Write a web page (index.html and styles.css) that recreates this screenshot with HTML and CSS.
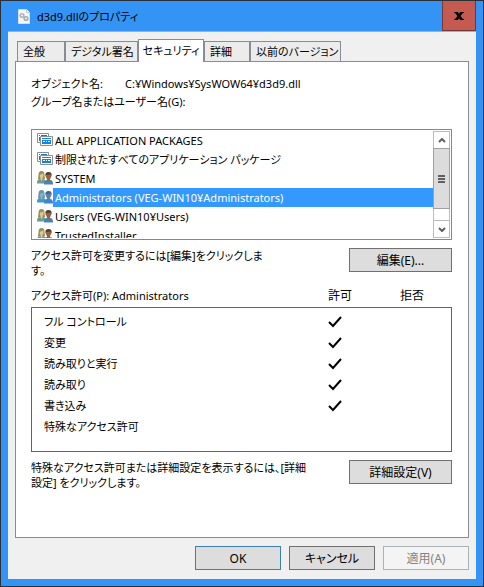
FILE: index.html
```html
<!DOCTYPE html>
<html lang="ja">
<head>
<meta charset="utf-8">
<meta name="viewport" content="width=device-width, initial-scale=1">
<title>d3d9.dllのプロパティ</title>
<link rel="stylesheet" href="styles.css">
</head>
<body>
<svg class="defs" aria-hidden="true">
  <symbol id="package" viewBox="0 0 16 16">
    <path d="M.5 1.500h11v9H.5z" fill="#fff" stroke="#8a9196"/>
    <path d="M2 3h1v1H2zM4 3h6v1H4zM2 5h1v4H2z" fill="#1c78c4"/>
    <path d="M3.500 4.500h12v9h-12z" fill="#fff" stroke="#8a9196"/>
    <path d="M5 6h9v1H5zM5 8h9v4H5z" fill="#1683d8"/>
    <path d="M6 9h2v1H6zM9 9h1v1H9zM11 9h2v1h-2z" fill="#fff"/>
  </symbol>
  <symbol id="users" viewBox="0 0 16 16">
    <path class="hair-a" d="M1 9c0-1 .5-2 .5-4C1.500 2.500 2.500 1 4.500 1s3 1.500 3 3.500c0 2 .5 3 .5 4.500z"/>
    <path class="coat-a" d="M0 13.500c0-3 .7-4.300 3-4.500h3c2 .2 3 1.500 3 4.500z"/>
    <path class="face-a" d="M3 4.500C4 4.500 5.500 4 6 3c.8 1 .8 3.500-.5 5v1.500L4.500 11l-1-1.500V8C3 7 2.700 6 3 4.500z"/>
    <path class="coat-b" d="M7 14.500c0-3 .8-4.300 3-4.500h3c2.300.2 3 1.500 3 4.500z"/>
    <path class="hair-b" d="M8.500 6C8 3.500 9 2 11.500 2S15 3.500 14.500 6l-.5 1H9z"/>
    <path class="face-b" d="M9 5c2 .2 3.500-.2 4.500-.8L14 5c.2 2-.3 3.500-1 4.200V10l-1.500 1.500L10 10v-.8C9.300 8.500 8.800 7 9 5z"/>
  </symbol>
  <symbol id="check" viewBox="0 0 14 12">
    <path d="M1 6l4 4L13 1" fill="none" stroke="#000" stroke-width="2"/>
  </symbol>
</svg>
<main class="window">
  <header class="titlebar">
    <svg class="file-icon" viewBox="0 0 12 15" aria-hidden="true">
      <path d="M.5.5h8l3 3v11H.5z" fill="#f5f5f5" stroke="#d9dde0"/>
      <path d="M8.500.5v3h3" fill="#fff" stroke="#c4c8cc"/>
      <circle cx="4" cy="6.500" r="1.800" fill="none" stroke="#b0b5b9" stroke-width="1.600"/>
      <circle cx="8" cy="9.500" r="1.800" fill="none" stroke="#a6abb0" stroke-width="1.600"/>
    </svg>
    <h1>d3d9.dllのプロパティ</h1>
    <button class="close" type="button" aria-label="閉じる">
      <svg viewBox="0 0 10 8" aria-hidden="true"><path d="M0 0h4l1 2 1-2h4v1H9L6.500 4 9 7h1v1H6L5 6 4 8H0V7h1l2.500-3L1 1H0z"/></svg>
    </button>
  </header>
  <div class="client">
    <div class="tabs" role="tablist">
      <button type="button" role="tab">全般</button>
      <button type="button" role="tab">デジタル署名</button>
      <button type="button" role="tab" class="active" aria-selected="true">セキュリティ</button>
      <button type="button" role="tab">詳細</button>
      <button type="button" role="tab">以前のバージョン</button>
    </div>
    <section class="panel" role="tabpanel">
      <div class="object"><span>オブジェクト名:</span><span>C:¥Windows¥SysWOW64¥d3d9.dll</span></div>
      <div class="caption" id="groups">グループ名またはユーザー名(G):</div>
      <div class="listbox">
        <ul role="listbox" aria-labelledby="groups">
          <li role="option"><svg class="item-icon"><use href="#package"/></svg><span>ALL APPLICATION PACKAGES</span></li>
          <li role="option"><svg class="item-icon"><use href="#package"/></svg><span>制限されたすべてのアプリケーション パッケージ</span></li>
          <li role="option"><svg class="item-icon"><use href="#users"/></svg><span>SYSTEM</span></li>
          <li role="option" class="selected" aria-selected="true"><svg class="item-icon"><use href="#users"/></svg><span>Administrators (VEG-WIN10¥Administrators)</span></li>
          <li role="option"><svg class="item-icon"><use href="#users"/></svg><span>Users (VEG-WIN10¥Users)</span></li>
          <li role="option"><svg class="item-icon"><use href="#users"/></svg><span>TrustedInstaller</span></li>
        </ul>
        <div class="scrollbar">
          <button type="button" aria-label="上へ"><svg viewBox="0 0 8 5"><path d="M1 4l3-3 3 3"/></svg></button>
          <div class="thumb"><i></i><i></i><i></i></div>
          <button type="button" class="down" aria-label="下へ"><svg viewBox="0 0 8 5"><path d="M1 1l3 3 3-3"/></svg></button>
        </div>
      </div>
      <div class="action">
        <p>アクセス許可を変更するには[編集]をクリックしま<br>す。</p>
        <button class="button wide" type="button">編集(E)...</button>
      </div>
      <table class="permissions">
        <thead><tr><th scope="col">アクセス許可(P): Administrators</th><th scope="col">許可</th><th scope="col">拒否</th></tr></thead>
        <tbody>
          <tr><td>フル コントロール</td><td><svg><use href="#check"/></svg></td><td></td></tr>
          <tr><td>変更</td><td><svg><use href="#check"/></svg></td><td></td></tr>
          <tr><td>読み取りと実行</td><td><svg><use href="#check"/></svg></td><td></td></tr>
          <tr><td>読み取り</td><td><svg><use href="#check"/></svg></td><td></td></tr>
          <tr><td>書き込み</td><td><svg><use href="#check"/></svg></td><td></td></tr>
          <tr><td>特殊なアクセス許可</td><td></td><td></td></tr>
        </tbody>
      </table>
      <div class="action">
        <p>特殊なアクセス許可または詳細設定を表示するには、[詳細<br>設定] をクリックします。</p>
        <button class="button wide" type="button">詳細設定(V)</button>
      </div>
    </section>
    <footer>
      <button class="button default" type="button">OK</button>
      <button class="button" type="button">キャンセル</button>
      <button class="button" type="button" disabled>適用(A)</button>
    </footer>
  </div>
</main>
</body>
</html>
```
FILE: styles.css
```css
* { box-sizing: border-box; }
body, h1, p, ul { margin: 0; padding: 0; }
body, button {
  font-family: "Noto Sans", "Noto Sans CJK JP", sans-serif;
  font-size: 11px;
  line-height: 15px;
  font-feature-settings: "palt";
  color: #000;
}
button { padding: 0; border-radius: 0; white-space: nowrap; }
.defs { position: absolute; width: 0; height: 0; }

.window {
  display: flex;
  flex-direction: column;
  min-height: 100vh;
  padding: 0 7px 7px;
  border: 1px solid #2b2f36;
  background: #3394f5;
}
.titlebar { display: flex; align-items: center; height: 30px; padding-left: 10px; }
.titlebar h1 { flex: 1; margin-left: 7px; font-size: 11px; font-weight: 400; }
.file-icon { width: 12px; height: 15px; }
.close {
  display: grid;
  place-items: center;
  width: 34px;
  height: 30px;
  border: 1px solid #70393c;
  border-top: 0;
  background: #c45a50;
}
.close svg { width: 10px; height: 8px; }

.client {
  flex: 1;
  display: flex;
  flex-direction: column;
  padding: 7px 7px 9px;
  border-top: 1px solid #8eb5d8;
  background: #f0f0f0;
}
.tabs { display: flex; align-items: flex-end; padding-left: 2px; }
.tabs button {
  height: 20px;
  padding: 0 5px;
  border: 1px solid #898c95;
  border-bottom: 0;
  background: #ececec;
  text-align: left;
}
.tabs button:nth-child(1) { width: 48px; }
.tabs button:nth-child(2) { width: 73px; }
.tabs button:nth-child(3) { width: 66px; }
.tabs button:nth-child(4) { width: 46px; }
.tabs button:nth-child(5) { width: 91px; }
.tabs .active {
  z-index: 1;
  height: 23px;
  margin-bottom: -1px;
  padding: 0 0 2px;
  background: #fff;
  text-align: center;
}
.panel {
  flex: 1;
  padding: 13px 16px 16px 15px;
  border: 1px solid #898c95;
  background: #fff;
}
.object { display: flex; height: 18px; line-height: 18px; }
.object span:first-child { width: 94px; }
.caption { height: 18px; line-height: 18px; }

.listbox {
  display: flex;
  height: 111px;
  margin-top: 18px;
  padding: 1px;
  border: 1px solid #828790;
}
.listbox ul { flex: 1; overflow: hidden; list-style: none; }
.listbox li { display: flex; height: 19px; padding-left: 4px; line-height: 19px; white-space: nowrap; }
.listbox li span { flex: 1; padding-left: 2px; }
.item-icon {
  --coat-a: #6f9a94;
  --hair-a: #94924c;
  --face-a: #e2c49e;
  --coat-b: #4684b8;
  --face-b: #96633f;
  --hair-b: #4a4038;
  width: 16px;
  height: 16px;
  margin: 1px 0;
}
.selected .item-icon {
  --coat-a: #4596c4;
  --hair-a: #6098a4;
  --face-a: #8aaecd;
  --coat-b: #3589da;
  --face-b: #647e9f;
  --hair-b: #366798;
}
.selected span { background: #3399ff; color: #fff; }
.coat-a { fill: var(--coat-a); }
.hair-a { fill: var(--hair-a); }
.face-a { fill: var(--face-a); }
.coat-b { fill: var(--coat-b); }
.face-b { fill: var(--face-b); }
.hair-b { fill: var(--hair-b); }
.scrollbar { display: flex; flex-direction: column; width: 17px; border: 1px solid #bcbcbc; }
.scrollbar button {
  display: grid;
  place-items: center;
  height: 16px;
  border: 0;
  background: #fff;
}
.scrollbar .down { height: 17px; margin-top: auto; border-top: 1px solid #bcbcbc; }
.scrollbar svg { width: 8px; height: 5px; }
.scrollbar path { fill: none; stroke: #606060; stroke-width: 2; }
.thumb {
  display: flex;
  flex-direction: column;
  align-items: center;
  justify-content: center;
  gap: 1px;
  height: 61px;
  margin: 0 -1px;
  border: 1px solid #a0a0a0;
  background: #dcdcdc;
}
.thumb i { width: 7px; height: 2px; background: #606060; }

.action { display: flex; justify-content: space-between; margin-top: 8px; }
.action p { white-space: nowrap; }
.button {
  width: 86px;
  height: 24px;
  border: 1px solid #707070;
  background: #dddddd;
  font-size: 12px;
}
.button.wide { flex: none; width: 103px; }
.button.default { border-color: #3c7fb1; }
.button:disabled { border-color: #adb2b5; background: #f4f4f4; color: #838383; }

.permissions { display: block; margin-top: 7px; }
.permissions thead, .permissions tbody { display: block; }
.permissions tr { display: grid; grid-template-columns: 1fr 72px 52px; }
.permissions th, .permissions td { padding: 0; font-weight: 400; text-align: left; }
.permissions thead { height: 22px; line-height: 22px; }
.permissions th + th { font-size: 12px; }
.permissions tbody { height: 145px; padding-top: 3px; border: 1px solid #646464; }
.permissions tbody tr { height: 21px; line-height: 21px; }
.permissions td:first-child { padding-left: 12px; }
.permissions td + td { padding-left: 1px; }
.permissions svg { display: block; width: 14px; height: 12px; margin: 5px 0; }

footer { display: flex; justify-content: flex-end; gap: 8px; margin-top: 8px; }
```
